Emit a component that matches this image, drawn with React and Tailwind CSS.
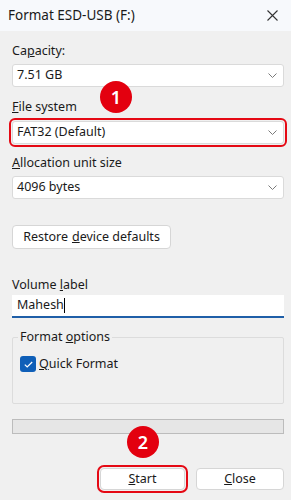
import React from "react";

const Chevron = () => (
  <svg width="9" height="5" viewBox="0 0 9 5" className="shrink-0">
    <path d="M0.5 0.5 L4.5 4.5 L8.5 0.5" fill="none" stroke="#7a7a7a" strokeWidth="1" />
  </svg>
);

const Select = ({ value, ring }) => (
  <div
    className={`h-[23px] bg-white border border-[#dadada] rounded-[3px] flex items-center justify-between pl-[4px] pr-[6px] ${
      ring ? "outline-[2.5px] outline-[#e50914] outline-offset-[1px]" : ""
    }`}
  >
    <span className="text-[12.5px] text-[#1a1a1a]">{value}</span>
    <Chevron />
  </div>
);

const Badge = ({ n, className }) => (
  <div
    className={`absolute w-[32px] h-[32px] rounded-full bg-[#e3000f] text-white flex items-center justify-center text-[18px] font-semibold ${className}`}
  >
    {n}
  </div>
);

export default function App() {
  return (
    <div
      className="relative w-[291px] h-[500px] bg-[#f0f0f0] text-[#1a1a1a] overflow-hidden"
      style={{ fontFamily: '"Noto Sans", "Open Sans", sans-serif' }}
    >
      {/* Title bar */}
      <div className="h-[31px] bg-[#f7f9fc] flex items-center justify-between pl-[8px] pr-[13px]">
        <span className="text-[13.5px] text-[#1a1a1a]">Format ESD-USB (F:)</span>
        <svg width="11" height="11" viewBox="0 0 11 11">
          <path d="M0.5 0.5 L10.5 10.5 M10.5 0.5 L0.5 10.5" stroke="#333" strokeWidth="1.1" />
        </svg>
      </div>

      <div className="px-[12px] pr-[7px] flex flex-col text-[12.5px]">
        <div className="mt-[11px] leading-[17px]">
          Ca<span className="underline">p</span>acity:
        </div>
        <div className="mt-[5px]">
          <Select value="7.51 GB" />
        </div>

        <div className="mt-[11px] leading-[17px]">
          <span className="underline">F</span>ile system
        </div>
        <div className="mt-[6px]">
          <Select value="FAT32 (Default)" ring />
        </div>

        <div className="mt-[10px] leading-[17px]">
          <span className="underline">A</span>llocation unit size
        </div>
        <div className="mt-[5px]">
          <Select value="4096 bytes" />
        </div>

        <div className="mt-[26px]">
          <div className="w-[159px] h-[24px] bg-white border border-[#d6d6d6] rounded-[4px] flex items-center justify-center">
            Restore <span className="underline ml-[4px]">d</span>evice defaults
          </div>
        </div>

        <div className="mt-[27px] leading-[17px]">
          Volume <span className="underline">l</span>abel
        </div>
        <div className="mt-[2px] h-[23px] bg-white border-b-2 border-[#1f5fa8] flex items-center pl-[5px]">
          <span>Mahesh</span>
          <span className="inline-block w-px h-[15px] bg-black" />
        </div>

        <div className="mt-[19px] relative border border-[#dcdcdc] rounded-[2px] h-[67px]">
          <div className="absolute -top-[10px] left-[5px] bg-[#f0f0f0] px-[2px] leading-[17px]">
            Format <span className="underline">o</span>ptions
          </div>
          <div className="mt-[17px] ml-[7px] flex items-center gap-[3px]">
            <div className="w-[16px] h-[16px] rounded-[3px] bg-[#0f5fb8] flex items-center justify-center">
              <svg width="9" height="7" viewBox="0 0 9 7">
                <path d="M0.8 3.6 L3.2 6 L8.2 1" fill="none" stroke="white" strokeWidth="1.2" />
              </svg>
            </div>
            <span>
              <span className="underline">Q</span>uick Format
            </span>
          </div>
        </div>

        <div className="mt-[15px] h-[15px] bg-[#e6e6e6] border border-[#bcbcbc]" />

        <div className="mt-[34px] flex justify-end gap-[11px]">
          <div className="w-[85px] h-[22px] bg-white border border-[#d6d6d6] rounded-[4px] flex items-center justify-center outline-[2.5px] outline-[#e50914] outline-offset-[1px]">
            <span className="underline">S</span>tart
          </div>
          <div className="w-[88px] h-[22px] bg-white border border-[#d6d6d6] rounded-[4px] flex items-center justify-center">
            <span className="underline">C</span>lose
          </div>
        </div>
      </div>

      <Badge n="1" className="left-[100px] top-[81px]" />
      <Badge n="2" className="left-[127px] top-[426px]" />
    </div>
  );
}
